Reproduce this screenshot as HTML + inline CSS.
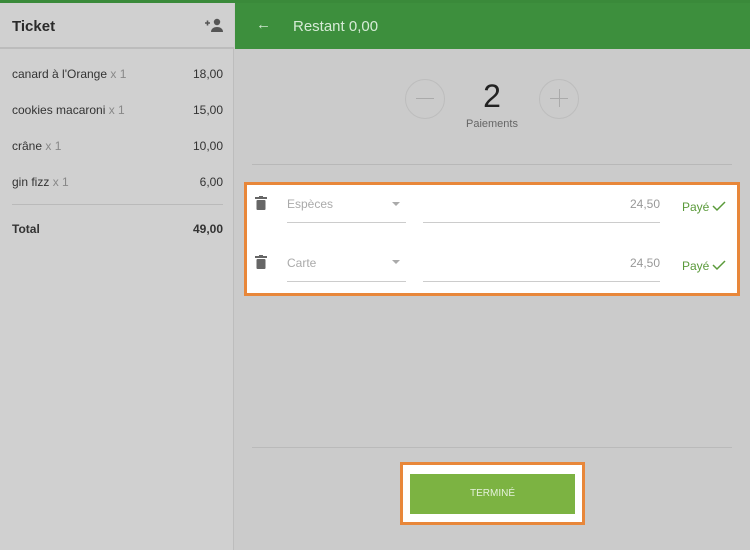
<!DOCTYPE html>
<html><head><style>
*{margin:0;padding:0;box-sizing:border-box}
body{width:750px;height:550px;overflow:hidden;background:#cbcbcb;font-family:"Liberation Sans",sans-serif;position:relative}
.a{position:absolute}
.row{position:absolute;left:12px;width:211px;font-size:12px;color:#333}
.row span.q{color:#888}
.row b{position:absolute;right:0;font-weight:normal}
</style></head><body>
<div class="a" style="left:0;top:0;width:750px;height:3px;background:#3a8a3a"></div>
<div class="a" style="left:0;top:3px;width:234px;height:547px;background:#d0d0d0;border-right:1px solid #bdbdbd"></div>
<div class="a" style="left:0;top:3px;width:234px;height:46px;background:#d0d0d0;border-bottom:2px solid #bcbcbc"></div>
<div class="a" style="left:12px;top:18px;font-size:15px;font-weight:bold;color:#2a2a2a">Ticket</div>
<svg class="a" style="left:204px;top:17px" width="20" height="16" viewBox="0 0 20 16"><path d="M1 6h5M3.5 3.5v5" stroke="#555" stroke-width="1.6"/><circle cx="13" cy="5" r="3.2" fill="#555"/><path d="M7 15c0-3.5 3-5 6-5s6 1.5 6 5z" fill="#555"/></svg>
<div class="row" style="top:67px">canard à l'Orange <span class="q">x 1</span><b>18,00</b></div>
<div class="row" style="top:103px">cookies macaroni <span class="q">x 1</span><b>15,00</b></div>
<div class="row" style="top:139px">crâne <span class="q">x 1</span><b>10,00</b></div>
<div class="row" style="top:175px">gin fizz <span class="q">x 1</span><b>6,00</b></div>
<div class="a" style="left:12px;top:204px;width:211px;height:1px;background:#bababa"></div>
<div class="row" style="top:222px;font-weight:bold">Total<b style="font-weight:bold">49,00</b></div>
<div class="a" style="left:235px;top:3px;width:515px;height:46px;background:#3d8f3d"></div>
<div class="a" style="left:256px;top:16px;font-size:15px;color:#cde6cd">←</div>
<div class="a" style="left:293px;top:18px;font-size:15px;color:#d6ebd6">Restant 0,00</div>
<div class="a" style="left:405px;top:79px;width:40px;height:40px;border:1px solid #bdbdbd;border-radius:50%"></div>
<div class="a" style="left:416px;top:98px;width:18px;height:1px;background:#aaa"></div>
<div class="a" style="left:539px;top:79px;width:40px;height:40px;border:1px solid #bdbdbd;border-radius:50%"></div>
<div class="a" style="left:550px;top:98px;width:18px;height:1px;background:#aaa"></div>
<div class="a" style="left:559px;top:89px;width:1px;height:18px;background:#aaa"></div>
<div class="a" style="left:470px;top:78px;width:44px;text-align:center;font-size:32px;color:#222">2</div>
<div class="a" style="left:452px;top:118px;width:80px;text-align:center;font-size:11px;color:#666">Paiements</div>
<div class="a" style="left:252px;top:164px;width:480px;height:1px;background:#b8b8b8"></div>
<div class="a" style="left:244px;top:182px;width:496px;height:114px;background:#fff;border:3px solid #e8873a"></div>
<svg class="a" style="left:255px;top:196px" width="12" height="14" viewBox="0 0 12 14"><rect x="0" y="1" width="12" height="2" fill="#666"/><rect x="4" y="0" width="4" height="2" fill="#666"/><rect x="1.5" y="4" width="9" height="10" rx="1" fill="#666"/></svg>
<svg class="a" style="left:255px;top:255px" width="12" height="14" viewBox="0 0 12 14"><rect x="0" y="1" width="12" height="2" fill="#666"/><rect x="4" y="0" width="4" height="2" fill="#666"/><rect x="1.5" y="4" width="9" height="10" rx="1" fill="#666"/></svg>
<div class="a" style="left:287px;top:197px;font-size:12px;color:#aaa">Espèces</div>
<div class="a" style="left:287px;top:256px;font-size:12px;color:#aaa">Carte</div>
<div class="a" style="left:392px;top:202px;border:4px solid transparent;border-top-color:#aaa"></div>
<div class="a" style="left:392px;top:260px;border:4px solid transparent;border-top-color:#aaa"></div>
<div class="a" style="left:287px;top:222px;width:119px;height:1px;background:#ccc"></div>
<div class="a" style="left:287px;top:281px;width:119px;height:1px;background:#ccc"></div>
<div class="a" style="left:423px;top:222px;width:237px;height:1px;background:#ccc"></div>
<div class="a" style="left:423px;top:281px;width:237px;height:1px;background:#ccc"></div>
<div class="a" style="left:600px;top:197px;width:60px;text-align:right;font-size:12px;color:#999">24,50</div>
<div class="a" style="left:600px;top:256px;width:60px;text-align:right;font-size:12px;color:#999">24,50</div>
<div class="a" style="left:682px;top:200px;font-size:12px;color:#5a9a3a">Payé</div>
<div class="a" style="left:682px;top:259px;font-size:12px;color:#5a9a3a">Payé</div>
<svg class="a" style="left:712px;top:200px" width="14" height="12"><path d="M1 6l4 4 8-8" stroke="#5a9a3a" stroke-width="1.5" fill="none"/></svg>
<svg class="a" style="left:712px;top:259px" width="14" height="12"><path d="M1 6l4 4 8-8" stroke="#5a9a3a" stroke-width="1.5" fill="none"/></svg>
<div class="a" style="left:252px;top:447px;width:480px;height:1px;background:#bababa"></div>
<div class="a" style="left:400px;top:462px;width:185px;height:63px;background:#fff;border:3px solid #e8873a"></div>
<div class="a" style="left:410px;top:474px;width:165px;height:40px;background:#7cb342;color:#e6f2dc;font-size:10px;text-align:center;line-height:40px">TERMINÉ</div>
</body></html>
